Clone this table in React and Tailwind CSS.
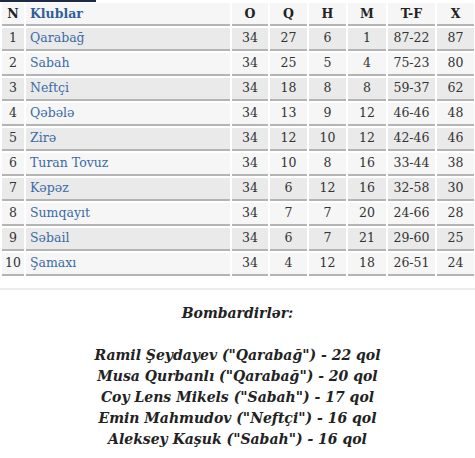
const rows = [
  [1, 'Qarabağ', 34, 27, 6, 1, '87-22', 87],
  [2, 'Sabah', 34, 25, 5, 4, '75-23', 80],
  [3, 'Neftçi', 34, 18, 8, 8, '59-37', 62],
  [4, 'Qəbələ', 34, 13, 9, 12, '46-46', 48],
  [5, 'Zirə', 34, 12, 10, 12, '42-46', 46],
  [6, 'Turan Tovuz', 34, 10, 8, 16, '33-44', 38],
  [7, 'Kəpəz', 34, 6, 12, 16, '32-58', 30],
  [8, 'Sumqayıt', 34, 7, 7, 20, '24-66', 28],
  [9, 'Səbail', 34, 6, 7, 21, '29-60', 25],
  [10, 'Şamaxı', 34, 4, 12, 18, '26-51', 24],
];

const scorers = [
  'Ramil Şeydayev ("Qarabağ") - 22 qol',
  'Musa Qurbanlı ("Qarabağ") - 20 qol',
  'Coy Lens Mikels ("Sabah") - 17 qol',
  'Emin Mahmudov ("Neftçi") - 16 qol',
  'Aleksey Kaşuk ("Sabah") - 16 qol',
];

const cell = 'h-[23px] p-0 border-b-2 border-[#b4b4b4] text-center';

export default function App() {
  return (
    <div className="relative w-[475px] h-[458px] bg-white overflow-hidden font-['DejaVu_Serif',serif] text-[12.5px] text-[#333]">
      <div className="absolute left-0 top-0 w-[96px] h-[2px] bg-[#1c2a48]" />
      <table className="table-fixed w-[476px] mt-[1px] border-separate border-spacing-[2px]">
        <colgroup>
          <col className="w-[22px]" />
          <col className="w-[204px]" />
          <col className="w-[36px]" />
          <col className="w-[37px]" />
          <col className="w-[37px]" />
          <col className="w-[38px]" />
          <col className="w-[47px]" />
          <col className="w-[37px]" />
        </colgroup>
        <thead>
          <tr className="bg-[#f6f6f6] font-bold text-[#222]">
            <th className={`${cell} pt-[2px]`}>N</th>
            <th className={`${cell} pt-[2px] text-left pl-[4px] text-[#2f5f97]`}>Klublar</th>
            <th className={`${cell} pt-[2px]`}>O</th>
            <th className={`${cell} pt-[2px]`}>Q</th>
            <th className={`${cell} pt-[2px]`}>H</th>
            <th className={`${cell} pt-[2px]`}>M</th>
            <th className={`${cell} pt-[2px]`}>T-F</th>
            <th className={`${cell} pt-[2px]`}>X</th>
          </tr>
        </thead>
        <tbody>
          {rows.map((r, i) => (
            <tr key={r[0]} className={i % 2 === 0 ? 'bg-[#eaeaea]' : 'bg-[#f6f6f6]'}>
              <td className={cell}>{r[0]}</td>
              <td className={`${cell} text-left pl-[4px] text-[#3a6ba5]`}>{r[1]}</td>
              {r.slice(2).map((v, j) => (
                <td key={j} className={cell}>{v}</td>
              ))}
            </tr>
          ))}
        </tbody>
      </table>
      <div className="mt-[10px] h-[2px] bg-[#ececec]" />
      <div className="pt-[13px] text-center italic font-bold text-[14px] leading-[21px] text-[#222]">
        <div>Bombardirlər:</div>
        <div className="h-[21px]" />
        {scorers.map((s) => (
          <div key={s}>{s}</div>
        ))}
      </div>
    </div>
  );
}
